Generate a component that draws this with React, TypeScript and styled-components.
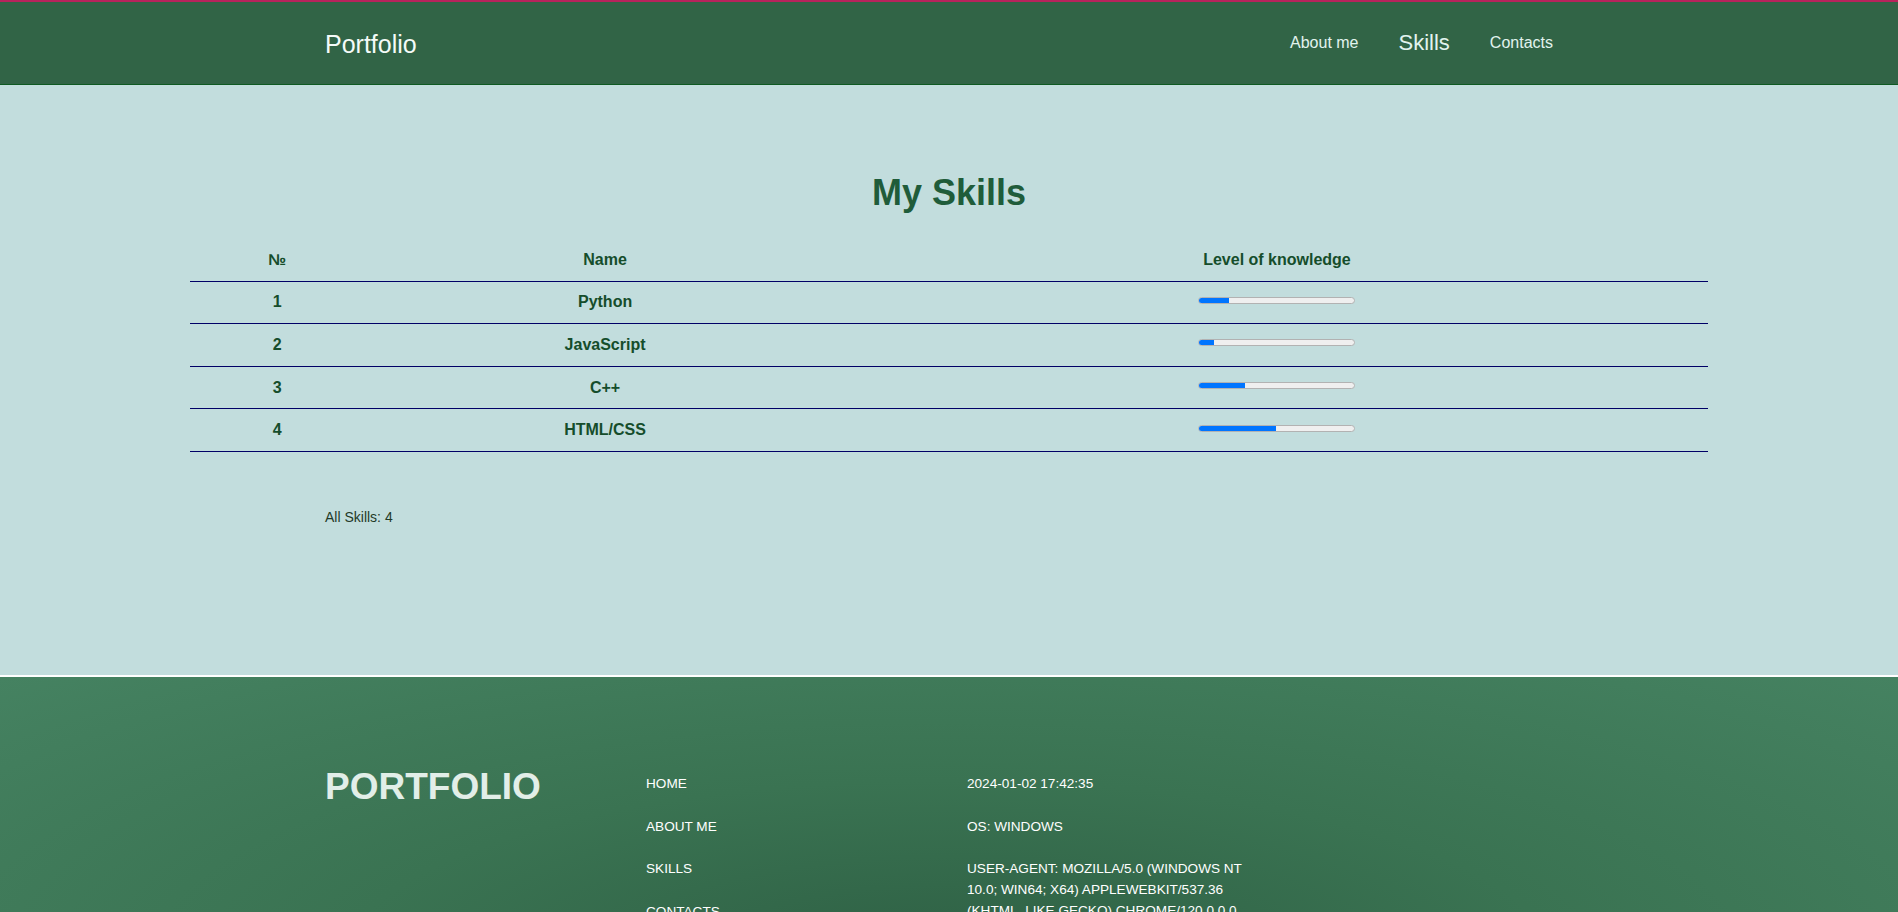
import React from 'react';
import styled, {createGlobalStyle} from 'styled-components';

const GlobalStyle = createGlobalStyle`
  html, body {
    margin: 0;
    padding: 0;
  }
  body {
    font-family: "Liberation Sans", Arial, sans-serif;
    background: #c2dddd;
  }
`;

type Skill = {
  id: number;
  name: string;
  level: number;
};

const skills: Skill[] = [
  {id: 1, name: 'Python', level: 20},
  {id: 2, name: 'JavaScript', level: 10},
  {id: 3, name: 'C++', level: 30},
  {id: 4, name: 'HTML/CSS', level: 50},
];

const navLinks = [
  {label: 'About me', active: false},
  {label: 'Skills', active: true},
  {label: 'Contacts', active: false},
];

const footerLinks = ['Home', 'About me', 'Skills', 'Contacts'];

const footerInfo = [
  '2024-01-02 17:42:35',
  'OS: Windows',
  'User-Agent: Mozilla/5.0 (Windows NT 10.0; Win64; x64) AppleWebKit/537.36 (KHTML, like Gecko) Chrome/120.0.0.0 Safari/537.36',
];

const App: React.FC = () => {
  return (
    <>
      <GlobalStyle />
      <Header>
        <Container>
          <Brand>Portfolio</Brand>
          <Nav>
            {navLinks.map((link) => (
              <NavLink key={link.label} href="#" $active={link.active}>
                {link.label}
              </NavLink>
            ))}
          </Nav>
        </Container>
      </Header>

      <Main>
        <Title>My Skills</Title>
        <SkillsTable>
          <thead>
            <tr>
              <HeadCell style={{width: '11.5%'}}>№</HeadCell>
              <HeadCell style={{width: '31.7%'}}>Name</HeadCell>
              <HeadCell>Level of knowledge</HeadCell>
            </tr>
          </thead>
          <tbody>
            {skills.map((skill) => (
              <tr key={skill.id}>
                <Cell>{skill.id}</Cell>
                <Cell>{skill.name}</Cell>
                <Cell>
                  <Track>
                    <Fill style={{width: `${skill.level}%`}} />
                  </Track>
                </Cell>
              </tr>
            ))}
          </tbody>
        </SkillsTable>
        <Container>
          <Total>All Skills: {skills.length}</Total>
        </Container>
      </Main>

      <Footer>
        <FooterGrid>
          <FooterLogo>PORTFOLIO</FooterLogo>
          <FooterList>
            {footerLinks.map((item) => (
              <FooterLink key={item} href="#">
                {item}
              </FooterLink>
            ))}
          </FooterList>
          <FooterList>
            {footerInfo.map((item) => (
              <FooterText key={item}>{item}</FooterText>
            ))}
          </FooterList>
        </FooterGrid>
      </Footer>
    </>
  );
};

const Container = styled.div`
  width: 1248px;
  margin: 0 auto;
  display: flex;
  align-items: center;
  justify-content: space-between;
`;

const Header = styled.header`
  height: 82px;
  display: flex;
  align-items: center;
  background: #316446;
  border-top: 2px solid #b8235c;
  border-bottom: 1px solid #0e5a22;
`;

const Brand = styled.a`
  font-size: 25px;
  color: #f4fbf8;
  text-decoration: none;
  margin-top: 3px;
`;

const Nav = styled.nav`
  display: flex;
  align-items: center;
`;

const NavLink = styled.a<{$active: boolean}>`
  padding: 0 20px;
  font-size: ${(p) => (p.$active ? '22px' : '16px')};
  color: #e2f3ee;
  text-decoration: none;
`;

const Main = styled.main`
  padding: 87px 0 0;
  height: 590px;
  box-sizing: border-box;
`;

const Title = styled.h1`
  margin: 0 0 25px;
  text-align: center;
  font-size: 36px;
  font-weight: 700;
  color: #1f5c3a;
`;

const SkillsTable = styled.table`
  width: 80%;
  margin: 0 auto;
  border-collapse: collapse;
`;

const HeadCell = styled.th`
  padding: 11.8px 0;
  font-size: 16px;
  line-height: 18px;
  font-weight: 700;
  color: #154d2b;
  text-align: center;
  border-bottom: 1px solid #000066;
`;

const Cell = styled.td`
  padding: 11.8px 0;
  font-size: 16px;
  line-height: 18px;
  font-weight: 700;
  color: #154d2b;
  text-align: center;
  vertical-align: middle;
  border-bottom: 1px solid #000066;
`;

const Track = styled.div`
  width: 157px;
  height: 7px;
  margin: 0 auto 4px;
  box-sizing: border-box;
  border: 1px solid #b2b2b2;
  border-radius: 4px;
  background: #efefef;
  overflow: hidden;
`;

const Fill = styled.div`
  height: 100%;
  margin: -1px 0 0 -1px;
  padding-bottom: 2px;
  background: #0075ff;
  border-radius: 4px 0 0 4px;
`;

const Total = styled.p`
  margin: 57px 0 0;
  font-size: 14px;
  line-height: 16px;
  color: #1f3a28;
`;

const Footer = styled.footer`
  border-top: 2px solid #ffffff;
  padding: 96px 0 90px;
  background: radial-gradient(ellipse at 50% 80%, #2e6044 0%, #3a7352 45%, #458261 100%);
`;

const FooterGrid = styled.div`
  width: 1248px;
  margin: 0 auto;
  display: grid;
  grid-template-columns: 300px 300px 300px;
  column-gap: 21px;
  align-items: start;
`;

const FooterLogo = styled.div`
  font-size: 37px;
  line-height: 28px;
  font-weight: 700;
  color: #e2eee8;
`;

const FooterList = styled.div`
  display: flex;
  flex-direction: column;
  gap: 21.5px;
`;

const FooterLink = styled.a`
  font-size: 13.6px;
  line-height: 21px;
  color: #ffffff;
  text-decoration: none;
  text-transform: uppercase;
`;

const FooterText = styled.span`
  font-size: 13.6px;
  line-height: 21px;
  color: #ffffff;
  text-transform: uppercase;
`;

export default App;
